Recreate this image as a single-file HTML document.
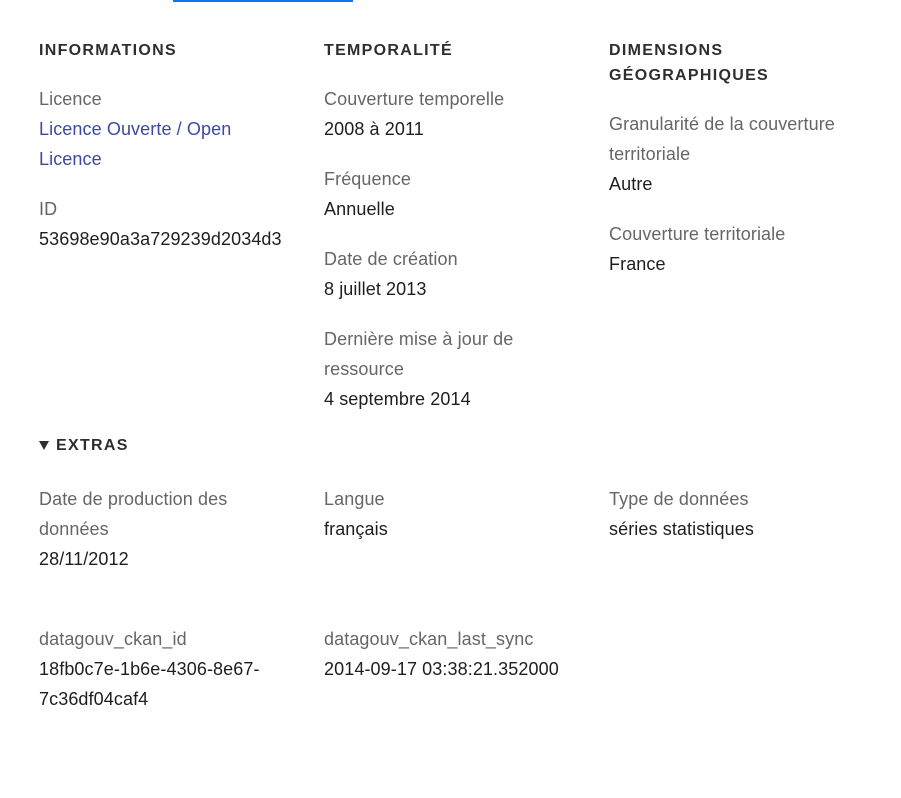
<!DOCTYPE html>
<html><head><meta charset="utf-8"><style>
body{margin:0;width:901px;height:798px;background:#fff;font-family:"Liberation Sans",sans-serif;position:relative;overflow:hidden}
div{position:absolute;white-space:nowrap;font-size:18px;line-height:30px;letter-spacing:0.1px}
.h{font-weight:bold;font-size:16px;letter-spacing:1.3px;color:#2e2e2e;line-height:25px}
.l{color:#666}
.v{color:#1e1e1e}
.a{color:#3b4a9c}
</style></head><body>
<div style="left:173px;top:0;width:180px;height:2px;background:#0a76f6"></div>

<div class="h" style="left:39px;top:38px">INFORMATIONS</div>
<div class="l" style="left:39px;top:84px">Licence</div>
<div class="a" style="left:39px;top:114px">Licence Ouverte / Open<br>Licence</div>
<div class="l" style="left:39px;top:194px">ID</div>
<div class="v" style="left:39px;top:224px">53698e90a3a729239d2034d3</div>

<div class="h" style="left:324px;top:38px">TEMPORALITÉ</div>
<div class="l" style="left:324px;top:84px">Couverture temporelle</div>
<div class="v" style="left:324px;top:114px">2008 à 2011</div>
<div class="l" style="left:324px;top:164px">Fréquence</div>
<div class="v" style="left:324px;top:194px">Annuelle</div>
<div class="l" style="left:324px;top:244px">Date de création</div>
<div class="v" style="left:324px;top:274px">8 juillet 2013</div>
<div class="l" style="left:324px;top:324px">Dernière mise à jour de<br>ressource</div>
<div class="v" style="left:324px;top:384px">4 septembre 2014</div>

<div class="h" style="left:609px;top:38px">DIMENSIONS<br>GÉOGRAPHIQUES</div>
<div class="l" style="left:609px;top:109px">Granularité de la couverture<br>territoriale</div>
<div class="v" style="left:609px;top:169px">Autre</div>
<div class="l" style="left:609px;top:219px">Couverture territoriale</div>
<div class="v" style="left:609px;top:249px">France</div>

<div style="left:39px;top:441px;width:0;height:0;border-left:5px solid transparent;border-right:5px solid transparent;border-top:9px solid #2e2e2e"></div>
<div class="h" style="left:56px;top:433px">EXTRAS</div>

<div class="l" style="left:39px;top:484px">Date de production des<br>données</div>
<div class="v" style="left:39px;top:544px">28/11/2012</div>
<div class="l" style="left:324px;top:484px">Langue</div>
<div class="v" style="left:324px;top:514px">français</div>
<div class="l" style="left:609px;top:484px">Type de données</div>
<div class="v" style="left:609px;top:514px">séries statistiques</div>

<div class="l" style="left:39px;top:624px">datagouv_ckan_id</div>
<div class="v" style="left:39px;top:654px">18fb0c7e-1b6e-4306-8e67-<br>7c36df04caf4</div>
<div class="l" style="left:324px;top:624px">datagouv_ckan_last_sync</div>
<div class="v" style="left:324px;top:654px">2014-09-17 03:38:21.352000</div>
</body></html>
